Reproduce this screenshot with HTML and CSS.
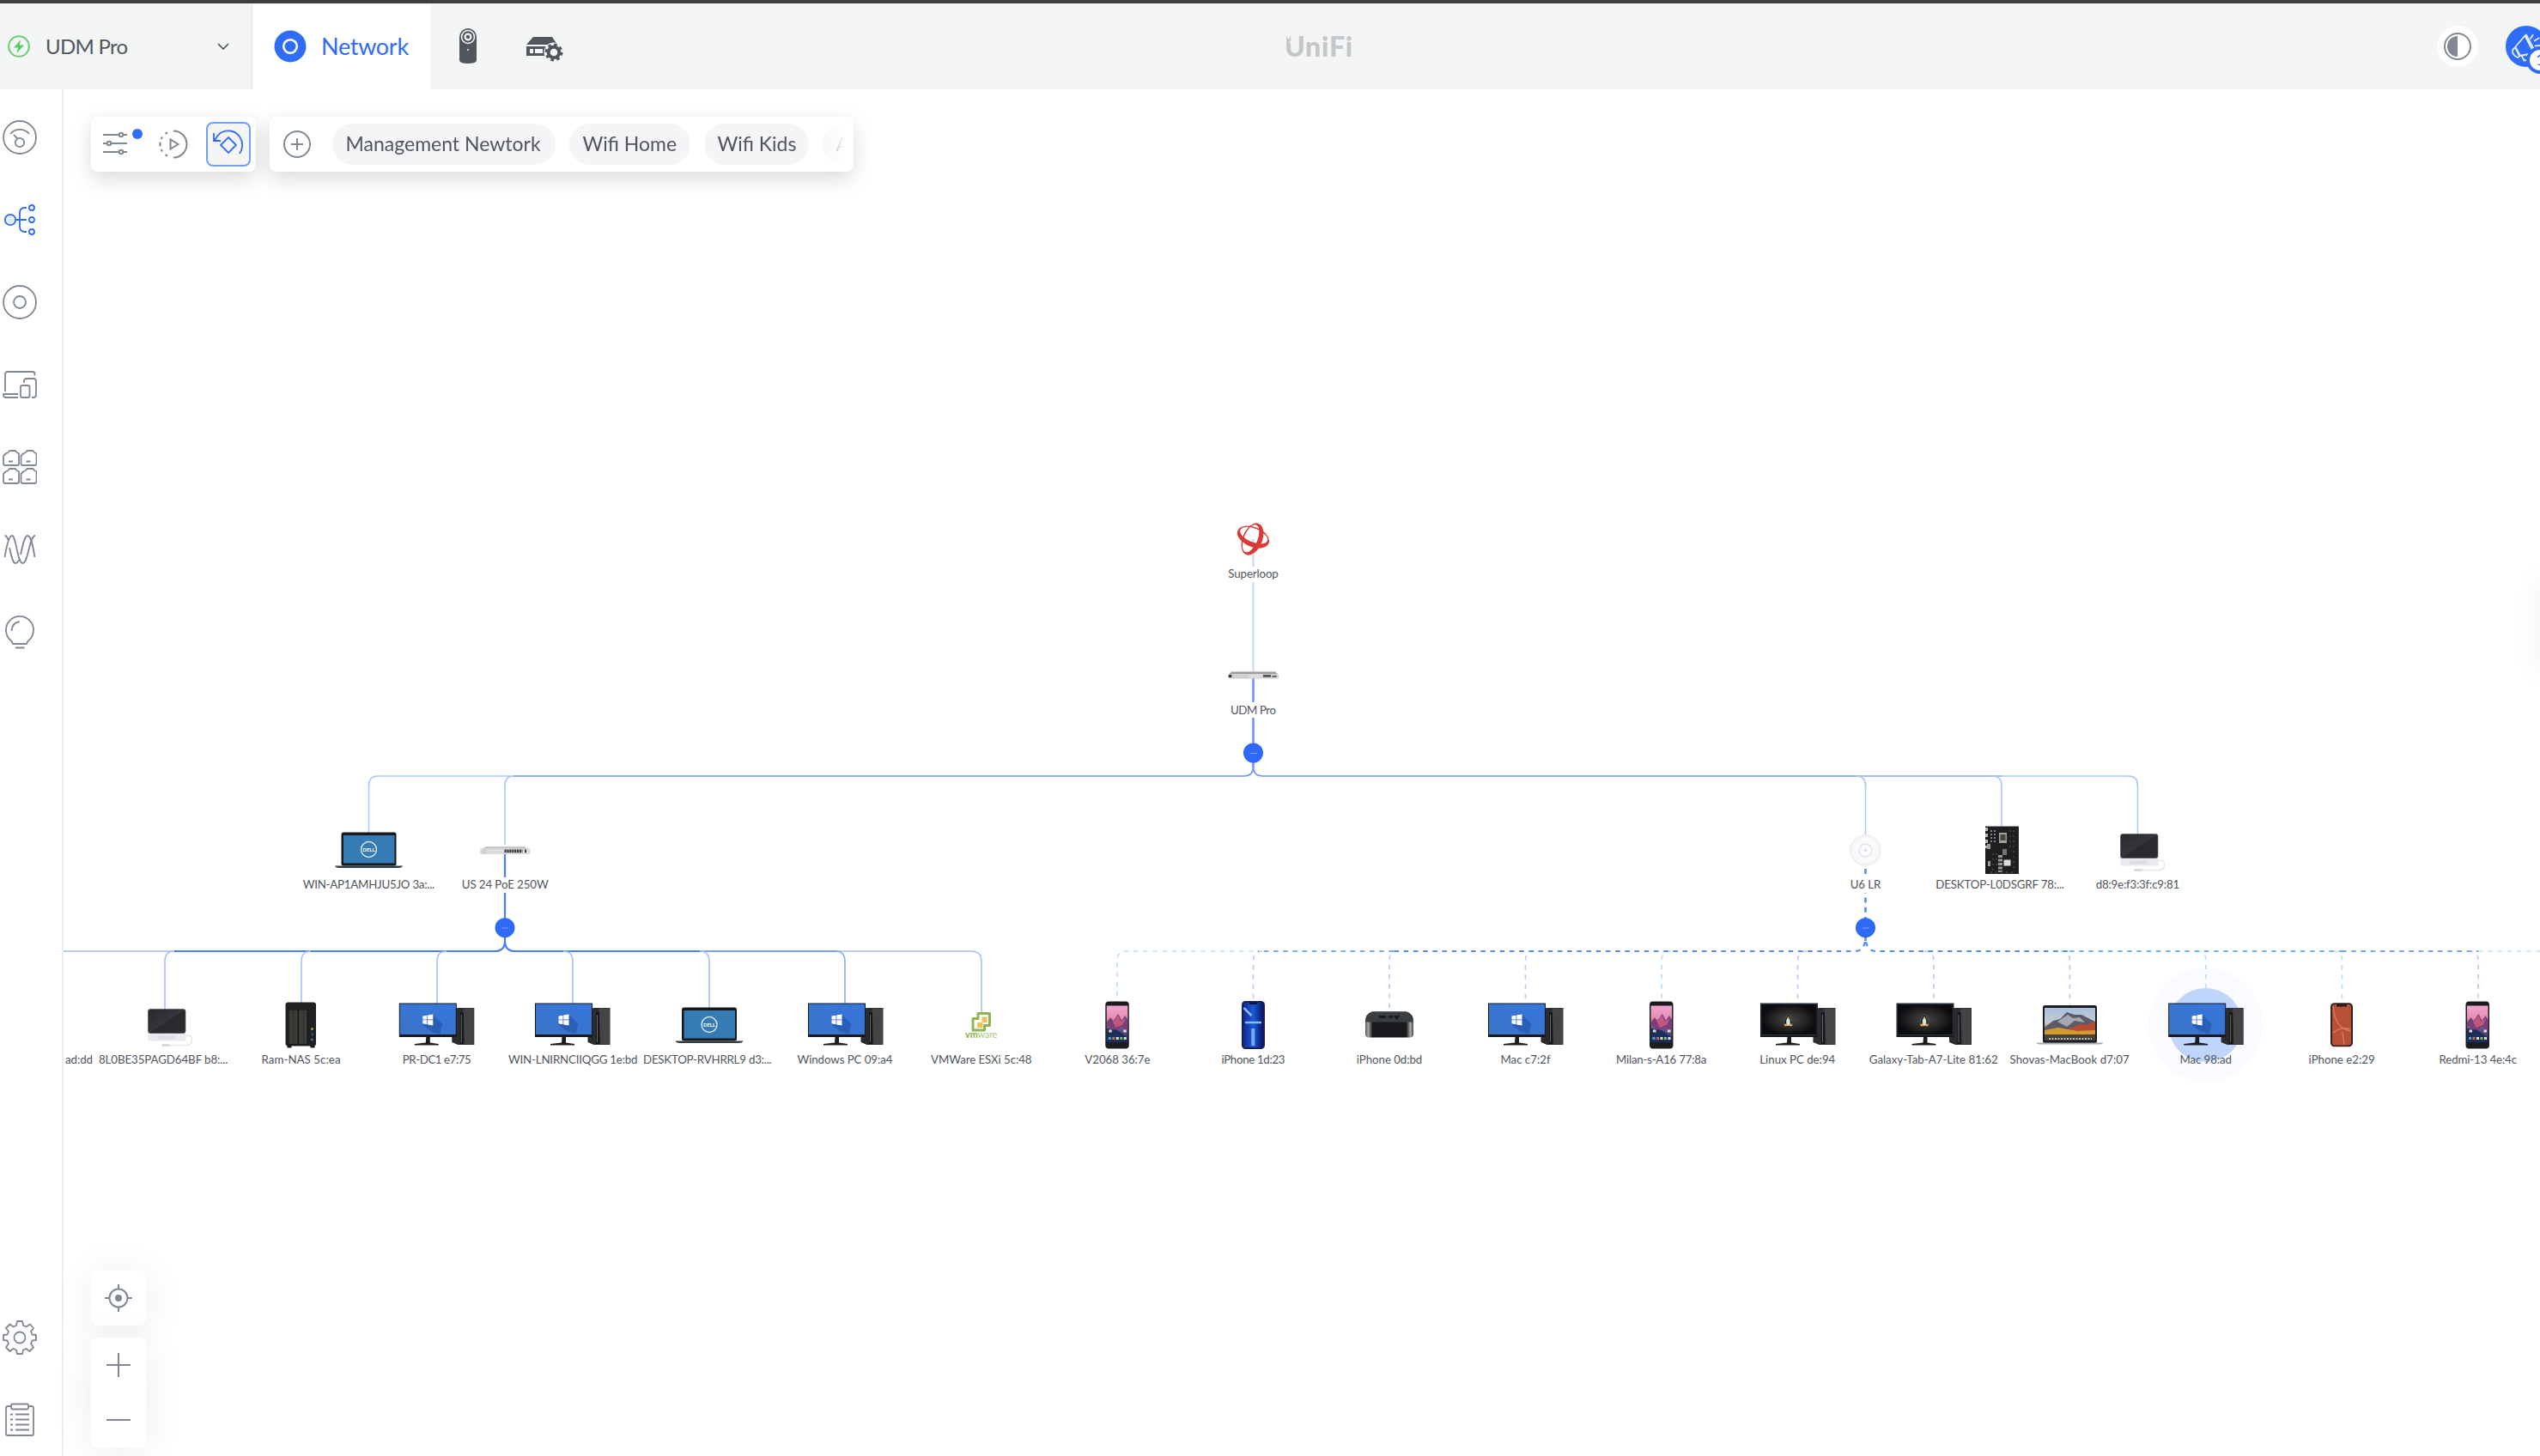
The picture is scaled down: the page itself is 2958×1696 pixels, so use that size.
FILE: index.html
```html
<!DOCTYPE html>
<html lang="en">
<head>
<meta charset="utf-8">
<title>UniFi Network</title>
<link rel="stylesheet" href="styles.css">
</head>
<body>
<header class="header">
  <div class="console">
    <svg class="bolt" width="26" height="26" viewBox="0 0 26 26"><circle cx="13" cy="13" r="11.8" fill="none" stroke="#69cd74" stroke-width="2"/><path d="M15 5.5 7 14.5h5l-1.5 6.5L19 11.500h-5.200z" fill="#5ccb68"/></svg>
    <span class="console-name">UDM Pro</span>
    <svg class="chevron" width="14" height="8" viewBox="0 0 14 8"><path d="M1 1l6 6 6-6" fill="none" stroke="#50565e" stroke-width="1.700"/></svg>
  </div>
  <div class="tab">
    <svg width="38" height="38" viewBox="0 0 38 38"><circle cx="19" cy="19" r="18.500" fill="#2f6cf8"/><circle cx="19" cy="19" r="7.800" fill="#2f6cf8" stroke="#fff" stroke-width="2.600"/></svg>
    <span class="tab-name">Network</span>
  </div>
  <svg class="app-camera" width="20" height="42" viewBox="0 0 20 42"><path d="M0 10a10 10 0 0 1 20 0v27q0 4-10 4T0 37z" fill="#50565e"/><circle cx="10" cy="10" r="7.500" fill="#50565e" stroke="#f4f5f5" stroke-width="1.600"/><circle cx="10" cy="10" r="3.400" fill="none" stroke="#f4f5f5" stroke-width="2.200"/><circle cx="10" cy="25" r="1" fill="#f4f5f5"/></svg>
  <svg class="app-server" width="43" height="30" viewBox="0 0 43 30"><path d="M8 1h22l6 9H0z" fill="#50565e"/><path d="M0 12h24v11H0z" fill="#50565e"/><path d="M4 15h4v5H4zm6 0h9v5h-9z" fill="#f4f5f5"/><circle cx="32" cy="19" r="11.500" fill="#f4f5f5"/><circle cx="32" cy="19" r="6.300" fill="none" stroke="#50565e" stroke-width="4"/><circle cx="32" cy="19" r="9" fill="none" stroke="#50565e" stroke-width="3" stroke-dasharray="3.530 3.530"/></svg>
  <div class="brand">UniFi<i class="px px-a"></i><i class="px px-b"></i></div>
  <div class="actions">
    <svg width="48" height="48" viewBox="0 0 48 48"><circle cx="24" cy="24" r="24" fill="#fff"/><circle cx="24" cy="24" r="15" fill="none" stroke="#808893" stroke-width="2"/><path d="M24 12a12 12 0 0 0 0 24z" fill="#808893"/></svg>
    <svg class="news" width="40" height="64" viewBox="0 -4 40 64"><circle cx="24" cy="28" r="24" fill="#2f6cf8"/><g fill="none" stroke="#e4edff" stroke-width="1.800" stroke-linejoin="round" stroke-linecap="round"><path d="M11 29 22.500 15.500 33 36l-17 3zM9 31q-2 3 0 6t5 4l3-2-5.500-10zM19 39.500l2.500 5 4-.5 1-3-1.500-3M23 16.500l1-2 10 19-1 1.500M29 19l2.500-4M33.500 21.500l5-3M34.500 27.500l5.500-.5"/></g><circle cx="40" cy="44" r="16" fill="#2f6cf8"/><circle cx="40" cy="44" r="12" fill="#fff"/><text class="badge" x="35" y="50">1</text></svg>
  </div>
</header>
<main class="main">
  <nav class="sidebar">
    <svg class="icon" viewBox="0 0 40 40"><circle cx="20" cy="20" r="19"/><path d="M9 16a13 11 0 0 1 22 0M13 17l4.500 4.500"/><circle cx="20" cy="26" r="5.200"/></svg>
    <svg class="icon active" viewBox="0 0 40 40"><circle cx="9" cy="20" r="6.200" fill="#e5eeff"/><path d="M15.500 20H28M28 6h-2q-6 0-6 6v16q0 6 6 6h2"/><circle cx="34" cy="6" r="3"/><circle cx="34" cy="20" r="3"/><circle cx="34" cy="34" r="3"/></svg>
    <svg class="icon" viewBox="0 0 40 40"><circle cx="20" cy="20" r="19"/><circle cx="20" cy="20" r="7"/></svg>
    <svg class="icon" viewBox="0 0 40 40"><path d="M3 28V8q0-3 3-3h29q2.500 0 2.500 3v1.500M18 31H1v1q0 3 3 3h14M25 18v-2q0-3 3-3h8q3 0 3 3v16q0 3-3 3h-2"/><rect x="21" y="21" width="10.500" height="14" rx="2"/></svg>
    <svg class="icon" viewBox="0 0 40 40"><path id="port" d="M1 16V7l3-3 2-.5L8 1h7l2 2.500 2 .5 0 12q0 2-2 2H3q-2 0-2-2zM7 13.500h5"/><use href="#port" x="20.500"/><use href="#port" y="21"/><use href="#port" x="20.500" y="21"/></svg>
    <svg class="icon wave" viewBox="0 0 40 40"><path d="M2.500 29C5 14 8 4 11 4c5 0 6 32 12.500 32C30 36 31 4 38 4M2.500 4q2.500 0 4 5M8 18c2.500 11 4 18 7 18 1.500 0 3-1 4-4M21 26C24 12 26 4 29 4c4 0 6 10 8.500 25"/></svg>
    <svg class="icon" viewBox="0 0 40 40"><path d="M12 34q-1-3-3-4.500a16 16 0 1 1 22 0Q29 31 28 34zM15 38.500h10.500M10.500 19q0-9 9-11"/></svg>
    <svg class="icon gear" viewBox="0 0 40 40"><path d="M17 1h6l1 5 3.500 1.500L32 4.500 36 9l-3 4 1.500 3.500 4.500.5v6l-4.500.500L33 27l3 4.500-4.500 4.500-4-3L24 34.500l-1 4.500h-6l-1-4.500L12.500 33l-4 3L4 31.500 7 27l-1.500-3.500L1 23v-6l4.500-.500L7 13 4 9l4.500-4.500 4 3L16 6z"/><circle cx="20" cy="20" r="6.500"/></svg>
    <svg class="icon log" viewBox="0 0 40 40"><path d="M10 4H6Q4 4 4 6v30q0 2 2 2h28q2 0 2-2V6q0-2-2-2h-4"/><rect x="10" y="1.500" width="20" height="6" rx="1.500"/><path d="M9 13.500h3m3 0h16M9 19.500h3m3 0h16M9 25.500h3m3 0h16M9 31.500h3m3 0h16"/></svg>
  </nav>
  <section class="canvas">
    <svg class="topology" width="2884" height="1592" viewBox="74 104 2884 1592">
      <defs>
        <linearGradient id="blue" x1="0" y1="1" x2="1" y2="0"><stop offset="0" stop-color="#3a74c8"/><stop offset="1" stop-color="#3676dc"/></linearGradient>
        <linearGradient id="dark" x1="0" y1="0" x2="1" y2="1"><stop offset="0" stop-color="#26282b"/><stop offset=".5" stop-color="#34363a"/><stop offset=".51" stop-color="#27292c"/><stop offset="1" stop-color="#2b2d30"/></linearGradient>
        <linearGradient id="sunset" x1="0" y1="0" x2="0" y2="1"><stop offset="0" stop-color="#f0a5d4"/><stop offset=".35" stop-color="#e58fae"/><stop offset=".55" stop-color="#7d5e96"/><stop offset="1" stop-color="#182a55"/></linearGradient>
        <linearGradient id="mac" x1="0" y1="0" x2="0" y2="1"><stop offset="0" stop-color="#a9bfdb"/><stop offset=".45" stop-color="#c5cbd8"/><stop offset=".7" stop-color="#b0602c"/><stop offset="1" stop-color="#4f5a52"/></linearGradient>
        <linearGradient id="cobalt"><stop offset="0" stop-color="#14268a"/><stop offset=".5" stop-color="#1a58dc"/><stop offset="1" stop-color="#0a1560"/></linearGradient>
        <linearGradient id="tv"><stop offset="0" stop-color="#555"/><stop offset=".06" stop-color="#aaa"/><stop offset=".15" stop-color="#1a1a1e"/><stop offset=".85" stop-color="#1a1a1e"/><stop offset=".94" stop-color="#aaa"/><stop offset="1" stop-color="#444"/></linearGradient>
        <radialGradient id="ap"><stop offset="0" stop-color="#fff"/><stop offset=".8" stop-color="#f8f8f8"/><stop offset="1" stop-color="#ececec"/></radialGradient>
        <radialGradient id="linux"><stop offset="0" stop-color="#484848"/><stop offset="1" stop-color="#0c0c0e"/></radialGradient>

        <g id="pcbody">
          <path d="M17 -18 24 -20H43V23H24L17 20z" fill="#2a2c2d"/><path d="M30 -19.500H42.500V22.500H32z" fill="#444446"/><path d="M26.500 -15h4v37h-4z" fill="#151617"/><path d="M28 -12v32" stroke="#6a6a6c" stroke-width="1"/>
          <path d="M-44.500 -25.500H22.500V14H-44.500z" fill="#17191c"/><path d="M-13 14h4.500v6.500l10 1.500v1.500h-28V22l13-1.500z" fill="#1b1d1f"/>
        </g>
        <g id="pc"><use href="#pcbody"/><path d="M-43.500 -24.500H21.500V11H-43.500z" fill="url(#blue)"/><path d="M-5 -12 6 -1 3 10-6 8-17 0z" fill="#2a5fb8"/><path d="M-17 -10.500l5-.800v4.800h-5zm5.800-1L-5 -12.500v6h-6.200zM-17 -5.700h5v4.900l-5-.9zm5.800 0H-5V.5l-6.200-1.100z" fill="#fff"/></g>
        <g id="linuxpc"><use href="#pcbody"/><path d="M-43.500 -24.500H21.500V11.500H-43.500z" fill="url(#linux)" stroke="#33465c" stroke-width=".7"/><path d="M-12 -12q2.300 0 2.300 3.500 3 4 2.500 8.500h-9.600q-.5-4.500 2.500-8.500 0-3.500 2.300-3.500z" fill="#1b1b1b" stroke="#77756e" stroke-width=".5"/><ellipse cx="-12" cy="-3.500" rx="2.300" ry="4.500" fill="#dededc"/><ellipse cx="-14.800" cy="0" rx="2" ry="1.400" fill="#d9ab48"/><ellipse cx="-9.200" cy="0" rx="2" ry="1.400" fill="#d9ab48"/><circle cx="-12" cy="-8.800" r="1" fill="#e0b050"/></g>
        <g id="dell"><rect x="-32" y="-21" width="64" height="39" rx="2.500" fill="#16191d"/><path d="M-29.500 -17.500h59.500V15h-59.500z" fill="#367bb3"/><path d="M-39.500 18h79q-1 2.500-5 2.500h-69q-4 0-5-2.500z" fill="#343a42"/><circle cy="-1" r="9" fill="none" stroke="#dcebf6" stroke-width="1.400"/><text class="dell" y="1.200" textLength="14" lengthAdjust="spacingAndGlyphs">DELL</text></g>
        <g id="thin"><rect x="-20" y="8" width="44" height="10" rx="1" fill="#e9eaee"/><rect x="-9" y="12" width="20" height="4" fill="#dcdde3"/><path d="M24 12q7-1 7 4 0 7-5 7H0" fill="none" stroke="#e6e7ee" stroke-width="1.500"/><path d="M-4 23H5" stroke="#d9dae2" stroke-width="3"/><rect x="-20" y="-19" width="43.500" height="28" rx="2.500" fill="url(#dark)" stroke="#55575b" stroke-width=".7"/></g>
        <g id="nas"><rect x="-18" y="-26.500" width="35.500" height="51" rx="3" fill="#202122"/><path d="M-16 24h5v2.500h-5zM11 24h5v2.500h-5z" fill="#171818"/><path d="M-15 -18H8.500V23H-15z" fill="#131414"/><path d="M-14 -17.500h10V22h-10zM-2.500 -17.500H7V22H-2.500z" fill="#3c3c39"/><path d="M-9 -17v38M3 -17v38" stroke="#32322f" stroke-width="2"/><circle cx="13" cy="4.500" r="1.500" fill="#a8a23c"/><path d="M12.300 9h1.700v4h-1.700z" fill="#335294"/><circle cx="13" cy="17" r="1.600" fill="#4b659d"/></g>
        <g id="phone"><rect x="-14" y="-27.500" width="27.500" height="55" rx="4" fill="#1d1c20"/><path d="M-12.500 -22.500H12V20H-12.500z" fill="url(#sunset)"/><path d="M-12.500 -3-8 -9-5 -5 1 -13 5 -5 9 -11 12 -6V8L5 2-2 7-12.500 0z" fill="#7a3f78"/><path d="M-6 -5 1 -11 4 -4 10 -8 6 0-2 3z" fill="#c0577f"/><path d="M-12.500 4 0 6 12 15V20H-12.500z" fill="#1c2d5c"/><g fill="#e4dcd4"><path d="M-10 5.500h3.500v3h-3.500zM7 5.500h3.500v3H7z"/><path d="M-10.500 14h3v3h-3z" fill="#4ca0d0"/><path d="M-6 14h3v3h-3z" fill="#de6544"/><path d="M-1.500 14h3v3h-3z"/><path d="M3 14h3v3H3z" fill="#69c953"/><path d="M7.500 14h3v3h-3z"/></g></g>
      </defs>

      <circle cx="2568.500" cy="1194" r="66.500" fill="#fafbff"/><circle cx="2568.500" cy="1194" r="43" fill="#bfd5fb"/>

      <g fill="none" stroke-width="1.600">
        <path d="M1459.500 628V783" stroke="#c9d8fc" stroke-width="2.200"/>
        <path d="M1459.500 789V894" stroke="#6693fb" stroke-width="2.500"/>
        <path d="M1459.500 893q0 11-11 11H598M1459.500 893q0 11 11 11H2162" stroke="#6b96fb"/>
        <path d="M2162 904H2331" stroke="#86a9fc"/>
        <path d="M598 904H439.500q-10 0-10 11V970M588 984V915q0-11 10-11M2162 904q10.500 0 10.500 11V972M2320 904q11 0 11 11V962M2331 904H2479q10.500 0 10.500 11V972" stroke="#adc5fd"/>
        <path d="M588 992V1096q0 12-12 12H203M588 1096q0 12 12 12H815" stroke="#4a7dfb" stroke-width="2.200"/>
        <path d="M815 1108H974" stroke="#7aa2fc" stroke-width="2"/>
        <path d="M74 1108H203M203 1108q-11 0-11 12V1176M362 1108q-11 0-11 12V1168M520 1108q-11 0-11 12V1170M656 1108q11 0 11 12V1170M815 1108q11 0 11 12V1174M974 1108H1131q12 0 12 12V1181" stroke="#a5c0fd"/>
        <path d="M973 1108q11 0 11 12V1170" stroke="#86a9fb"/>
        <path d="M2172.500 1012V1096" stroke="#4b92fb" stroke-width="2.600" stroke-dasharray="6 5.200"/>
        <g stroke-dasharray="5.600 5.600" stroke-width="1.700">
          <path d="M1460 1108H1312q-11 0-11 11V1168M2886 1108H2958M1946 1108q-11 0-11 11V1168M2558 1108q11 0 11 11V1170M2717 1108q10.500 0 10.500 11V1168" stroke="#b9e0fc"/>
          <path d="M1470 1108q-10.500 0-10.500 11V1168M1629 1108q-11 0-11 11V1178M1787 1108q-10.500 0-10.500 11V1170M2104 1108q-10.500 0-10.500 11V1170M2241 1108q11 0 11 11V1170M2400 1108q10.500 0 10.500 11V1170M2875 1108q11 0 11 11V1168" stroke="#bccdfd"/>
          <path d="M1623 1108H1465" stroke="#76aefb" stroke-width="2"/>
          <path d="M2172 1097q-2 11-12 11H1623M2173 1097q2 11 12 11H2410" stroke="#558ffa" stroke-width="2.200"/>
          <path d="M2410 1108H2727" stroke="#72b7fb" stroke-width="2.100"/><path d="M2727 1108H2886" stroke="#76a5fb" stroke-width="2"/>
        </g>
      </g>
      <g fill="#fff"><path d="M1425 660h70v18h-70zM1425 818h70v18h-70zM530 1022h116v18H530zM2145 1022h55v18h-55z"/></g>
      <g fill="#2e6af7"><circle cx="1459.500" cy="877" r="11.500"/><circle cx="588" cy="1080.700" r="11.500"/><circle cx="2172.500" cy="1080.700" r="11.500"/></g>
      <path d="M1456 877.500h7.500M584.300 1081h7.500M2169 1081h7.500" stroke="#7fa6ff" stroke-width="1.200"/>

      <g fill="#d93a32" fill-rule="evenodd">
        <path transform="rotate(22 1459.500 625.500)" d="M1440 625.500a19.500 11.500 0 1 0 39 0a19.500 11.500 0 1 0-39 0zM1442.500 623.500a17 8 0 1 0 34 0a17 8 0 1 0-34 0z"/>
        <path transform="rotate(-68 1458.500 628)" d="M1439 628a19.500 11.500 0 1 0 39 0a19.500 11.500 0 1 0-39 0zM1441.500 626a17 8 0 1 0 34 0a17 8 0 1 0-34 0z"/>
      </g>
      <path d="M1434 782.500h51l4 3.500v4.500h-59V786z" fill="#d0d0d0"/><path d="M1434 782.500h51l2.500 2.500h-56z" fill="#a0a0a0"/><circle cx="1432.700" cy="787.500" r="1.800" fill="#25283c"/><path d="M1471 786h9v2.800h-9zM1481.500 787h5v1.800h-5z" fill="#555"/><path d="M1454.500 785.500h15v4h-15z" fill="#ddd"/>
      <path d="M566 986h45l6.500 3v6H559v-6z" fill="#dcdcdc"/><path d="M566 986h45l2 2.500h-50z" fill="#c6c6c6"/><path d="M611 989.500h2v3.700h-2z" fill="#3c3c40"/><path d="M587.500 991.400h21" stroke="#3c3c40" stroke-width="3.600" stroke-dasharray="2.200 .7"/><circle cx="563.500" cy="991.500" r="1.800" fill="none" stroke="#a5c0e8" stroke-width=".8"/>
      <circle cx="2172.500" cy="990.500" r="18.500" fill="url(#ap)"/><circle cx="2172.500" cy="990.500" r="7.500" fill="none" stroke="#e0e0f5" stroke-width="1.400"/><circle cx="2172.500" cy="990.500" r="1.600" fill="#d6d6e2"/>
      <g><path d="M2312 962.500h39v55.500h-39z" fill="#1e1f20"/><path d="M2313.500 964v24" stroke="#b5b5b3" stroke-width="3" stroke-dasharray="4 3"/><path d="M2319 967v16M2323 967v16" stroke="#aaa" stroke-width="1.400" stroke-dasharray="2 2"/><path d="M2328 970h9v12h-9z" fill="#a5a198"/><path d="M2329.500 972h6v7h-6z" fill="#48453f"/><path d="M2329.500 996v20" stroke="#9a968d" stroke-width="5" stroke-dasharray="3 1.500"/><path d="M2333.500 1001.500h8v7h-8z" fill="#ddd"/><path d="M2332 989h5v7h-5z" fill="#77746d"/><path d="M2321 994v20M2325 994v18M2341 967v24M2345 967v46M2318 1016h30" stroke="#4e4e4d" stroke-width="1.300" stroke-dasharray="2 4"/><path d="M2314 983h4v6h-4zM2315 1003h3v6h-3z" fill="#999"/></g>
      <use href="#dell" x="429.500" y="990.500"/><use href="#thin" x="2489.500" y="990.500"/>
      <use href="#thin" x="192.500" y="1194.500"/><use href="#nas" x="350.500" y="1194"/><use href="#pc" x="509.300" y="1194"/><use href="#pc" x="667.500" y="1194"/><use href="#dell" x="826" y="1194.500"/><use href="#pc" x="985.500" y="1194"/>
      <path d="M1139 1180.500h13.500v14h-6v5.500H1133v-13.500h6z" fill="none" stroke="#8db755" stroke-width="3" stroke-linejoin="round"/><path d="M1143.500 1184.500h6v6.500h-6zM1138 1191h6.500v6h-6.500z" fill="#efc05a"/><text class="vm" x="1124" y="1208.700" textLength="37.500" lengthAdjust="spacingAndGlyphs"><tspan class="vm-b">vm</tspan>ware</text>
      <use href="#phone" x="1301.300" y="1194"/>
      <rect x="1446" y="1166" width="27" height="56" rx="4.500" fill="#16205e"/><rect x="1448" y="1168" width="23" height="52" rx="3" fill="url(#cobalt)"/><path d="M1448.500 1174l9 9M1450 1191h19" stroke="#7cc0ff" stroke-width="2.500"/><path d="M1459.300 1198v20" stroke="#74acff" stroke-width="4"/><path d="M1455 1168h9v2h-9z" fill="#10143a"/>
      <path d="M1598 1178.500h40q8 2 8 12v14q0 4-4 4h-48q-4 0-4-4v-14q0-10 8-12z" fill="url(#tv)"/><path d="M1598 1178.500h40q8 2 8 12h-56q0-10 8-12z" fill="#3b3e40"/><path d="M1606 1184.500h8M1617 1184.500h5M1624 1183l2.500 3 2.500-3" fill="none" stroke="#15161a" stroke-width="2.500"/>
      <use href="#pc" x="1777.500" y="1194"/><use href="#phone" x="1935" y="1194"/><use href="#linuxpc" x="2094.500" y="1194"/><use href="#linuxpc" x="2253" y="1194"/>
      <rect x="2379" y="1171" width="63" height="44" rx="2.500" fill="#1b1c1f"/><path d="M2381 1174h59v38h-59z" fill="url(#mac)"/><path d="M2381 1197l10-8 8-2 8-8 9 3 8 0 16 8v14h-59z" fill="#5d5a68"/><path d="M2396 1190l12-8 6 4 8-1 6 6-12-2-9 7z" fill="#a5a8b3"/><path d="M2408 1199l14-6 7 1 11-4v14l-30 2z" fill="#b64d31"/><path d="M2381 1200l16-3 22 4 21-1v8h-59z" fill="#d59a2d"/><path d="M2381 1205h59v7h-59z" fill="#4a4236"/><path d="M2386 1210h50" stroke="#a4c2d4" stroke-width="2" stroke-dasharray="2 1.500"/><path d="M2371.500 1214.500h78q-1 2-5 2h-68q-4 0-5-2z" fill="#a8aaad"/>
      <use href="#pc" x="2569.700" y="1194"/>
      <rect x="2714" y="1168.300" width="26" height="51" rx="4.500" fill="#33241f"/><rect x="2716" y="1170" width="22" height="47.500" rx="3" fill="#b84f37"/><path d="M2717 1172q2 26 20 29M2717 1203q10-8 20-4M2728 1202l2 15" fill="none" stroke="#d67d60" stroke-width="1.400"/><path d="M2721 1169h12v3.500h-12z" fill="#2a1d1a"/>
      <use href="#phone" x="2885.500" y="1194"/>

      <g class="labels">
        <text x="1430.300" y="673.300" textLength="58.500">Superloop</text>
        <text x="1433" y="832" textLength="53">UDM Pro</text>
        <text x="352.700" y="1035.300" textLength="153.500">WIN-AP1AMHJU5JO 3a:...</text>
        <text x="537.700" y="1035.300" textLength="101">US 24 PoE 250W</text>
        <text x="2154.700" y="1035.300" textLength="35.600">U6 LR</text>
        <text x="2254.300" y="1035.300" textLength="149.700">DESKTOP-L0DSGRF 78:...</text>
        <text x="2440.700" y="1035.300" textLength="97.500">d8:9e:f3:3f:c9:81</text>
        <text x="76" y="1239.300" textLength="32">ad:dd</text>
        <text x="115" y="1239.300" textLength="150.500">8L0BE35PAGD64BF b8:...</text>
        <text x="304.500" y="1239.300" textLength="92">Ram-NAS 5c:ea</text>
        <text x="468.800" y="1239.300" textLength="80">PR-DC1 e7:75</text>
        <text x="592" y="1239.300" textLength="150.500">WIN-LNIRNCIIQGG 1e:bd</text>
        <text x="749" y="1239.300" textLength="149.700">DESKTOP-RVHRRL9 d3:...</text>
        <text x="928.500" y="1239.300" textLength="111">Windows PC 09:a4</text>
        <text x="1084" y="1239.300" textLength="117.500">VMWare ESXi 5c:48</text>
        <text x="1263.300" y="1239.300" textLength="76.200">V2068 36:7e</text>
        <text x="1422.500" y="1239.300" textLength="74">iPhone 1d:23</text>
        <text x="1579.800" y="1239.300" textLength="76.500">iPhone 0d:bd</text>
        <text x="1747.400" y="1239.300" textLength="58.200">Mac c7:2f</text>
        <text x="1882.100" y="1239.300" textLength="105.200">Milan-s-A16 77:8a</text>
        <text x="2049.300" y="1239.300" textLength="88">Linux PC de:94</text>
        <text x="2176.700" y="1239.300" textLength="150">Galaxy-Tab-A7-Lite 81:62</text>
        <text x="2340.500" y="1239.300" textLength="139.200">Shovas-MacBook d7:07</text>
        <text x="2538.400" y="1239.300" textLength="60.600">Mac 98:ad</text>
        <text x="2688.600" y="1239.300" textLength="77">iPhone e2:29</text>
        <text x="2840.600" y="1239.300" textLength="90.400">Redmi-13 4e:4c</text>
      </g>
    </svg>
    <div class="toolbar">
      <div class="panel tools">
        <svg width="54" height="52" viewBox="0 0 54 52" class="line"><path d="M6 15h19M29 15h5M6 25h5M15 25h19M6 35h19M29 35h5"/><circle cx="27" cy="15" r="2.200"/><circle cx="13" cy="25" r="2.200"/><circle cx="27" cy="35" r="2.200"/><circle cx="46" cy="14" r="6" class="dot"/></svg>
        <svg width="34" height="34" viewBox="0 0 34 34" class="line"><path d="M17 1.500a15.500 15.500 0 0 1 0 31M10 3.200 7.500 4.800M4 8.500 2.500 11M1.500 14.500v5M2.500 23 4 25.500M7.500 29.200 10 30.800M13.500 11.500v11l9-5.500z"/></svg>
        <button class="tool-active" aria-label="Reset layout"><svg width="36" height="36" viewBox="0 0 36 36"><path d="M2 14C6 4 14 2 20 2.500 30 4 35 13 34 21q-.5 4-3 8M1 5v9h8M18 10l9 9-9 9-9-9z" fill="none" stroke="#2f6cf8" stroke-width="1.800"/></svg></button>
      </div>
      <div class="panel networks">
        <svg width="32" height="32" viewBox="0 0 32 32" class="line"><circle cx="16" cy="16" r="15"/><path d="M16 9v14M9 16h14"/></svg>
        <div class="pills">
          <span class="pill pill-a">Management Newtork</span>
          <span class="pill pill-b">Wifi Home</span>
          <span class="pill pill-c">Wifi Kids</span>
          <span class="pill pill-d">A</span>
        </div>
      </div>
    </div>
    <div class="zoom">
      <div class="panel soft"><svg width="64" height="64" viewBox="0 0 64 64" class="line"><circle cx="32" cy="32" r="10.500"/><path d="M32 16v5.500M32 42.500V48M16 32h5.500M42.500 32H48"/><circle cx="32" cy="32" r="4" class="fill"/></svg></div>
      <div class="panel soft"><svg width="64" height="128" viewBox="0 0 64 128" class="line"><path d="M18 32h28M32 18v28M18 96h28"/></svg></div>
    </div>
    <div class="drawer"></div>
  </section>
</main>
</body>
</html>
```
FILE: styles.css
```css
* { box-sizing: border-box; }
body {
  margin: 0;
  width: 2958px;
  height: 1696px;
  display: flex;
  flex-direction: column;
  overflow: hidden;
  background: #fff;
  color: #50565e;
  font-family: Lato, "Open Sans", sans-serif;
}
svg { display: block; flex: none; }
.header {
  display: flex;
  align-items: center;
  height: 104px;
  flex: none;
  background: #f4f5f5;
  border-top: 4px solid #3d3e3f;
}
.console {
  display: flex;
  align-items: center;
  width: 294px;
  height: 100%;
  padding-left: 9px;
  border-right: 2px solid #ebecee;
}
.console-name {
  width: 200px;
  margin-left: 18px;
  padding-bottom: 2px;
  font-size: 24px;
  letter-spacing: -0.7px;
}
.tab {
  display: flex;
  align-items: center;
  gap: 17px;
  width: 207px;
  height: 100%;
  padding-left: 25px;
  background: #fff;
}
.tab-name {
  padding-bottom: 2px;
  color: #2f6cf8;
  font-size: 27px;
  letter-spacing: -0.3px;
  white-space: nowrap;
}
.app-camera { margin-left: 34px; }
.app-server { margin-left: 58px; margin-top: 6px; }
.brand {
  position: relative;
  margin-left: 840px;
  width: 86px;
  padding-bottom: 2px;
  color: #c4c7ca;
  font-size: 32px;
  font-weight: 900;
  letter-spacing: 0.8px;
}
.px { position: absolute; width: 3px; height: 3px; background: #f4f5f5; }
.px-a { left: 3px; top: 8px; }
.px-b { left: 6px; top: 14px; }
.actions { display: flex; align-items: center; gap: 32px; margin-left: auto; }
.badge { font: 18px Lato, sans-serif; fill: #2f6cf8; }
.main { display: flex; flex: 1; min-height: 0; }
.sidebar {
  display: flex;
  flex-direction: column;
  gap: 56px;
  width: 74px;
  flex: none;
  padding: 36px 0 0 3px;
  border-right: 2px solid #ededef;
}
.icon {
  width: 40px;
  height: 40px;
  fill: none;
  stroke: #808893;
  stroke-width: 1.8;
  stroke-linejoin: round;
}
.icon.active { stroke: #2f6cf8; }
.gear { margin-top: auto; }
.log { margin-bottom: 22px; }
.canvas {
  position: relative;
  display: flex;
  flex: 1;
  flex-direction: column;
  justify-content: space-between;
  padding: 32px 32px 10px;
}
.topology { position: absolute; left: 0; top: 0; }
.labels { font-size: 13.3px; fill: #50565e; }
.dell { font: bold 5.5px Lato, sans-serif; fill: #fff; text-anchor: middle; }
.vm { font: 12px Lato, sans-serif; fill: #a9c77f; }
.vm-b { font-weight: 900; fill: #8db755; }
.toolbar { position: relative; display: flex; gap: 16px; }
.panel {
  display: flex;
  align-items: center;
  background: #fff;
  border-radius: 8px;
  box-shadow: 0 8px 24px rgba(0, 0, 0, .15);
}
.tools { width: 192px; height: 64px; padding: 0 6px 0 8px; }
.tools .line:nth-child(2) { margin-left: 17px; }
.tool-active {
  display: flex;
  align-items: center;
  justify-content: center;
  width: 52px;
  height: 52px;
  margin-left: auto;
  padding: 0;
  background: #f5f5f6;
  border: 2px solid #6fa1fa;
  border-radius: 8px;
}
.line { fill: none; stroke: #808893; stroke-width: 2; }
.dot { fill: #2f6cf8; stroke: none; }
.fill { fill: #808893; stroke: none; }
.networks { width: 680px; height: 64px; padding: 0 9px 0 16px; }
.pills {
  display: flex;
  gap: 16px;
  margin-left: 25px;
  width: 598px;
  overflow: hidden;
  mask-image: linear-gradient(to right, #000 556px, transparent 598px);
}
.pill {
  flex: none;
  height: 48px;
  border-radius: 24px;
  padding-left: 15.5px;
  background: #f5f5f8;
  font-size: 23px;
  line-height: 47px;
  white-space: nowrap;
}
.pill-a { width: 260px; }
.pill-b { width: 141px; }
.pill-c { width: 122px; }
.pill-d { width: 100px; }
.zoom { position: relative; display: flex; flex-direction: column; gap: 14px; width: 64px; }
.soft { box-shadow: 0 4px 46px rgba(0, 0, 0, .08); }
.drawer {
  position: absolute;
  right: -10px;
  top: 570px;
  width: 10px;
  height: 110px;
  box-shadow: 0 0 30px rgba(0, 0, 0, .1);
}
```
